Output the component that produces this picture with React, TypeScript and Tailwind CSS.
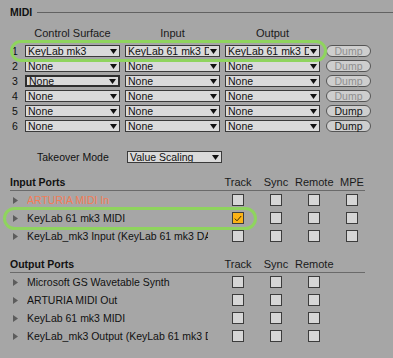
import React from 'react';

type Port = { name: string; orange?: boolean; track?: boolean };

const surfaces = [
  { cs: 'KeyLab mk3', input: 'KeyLab 61 mk3 DAW', output: 'KeyLab 61 mk3 DAW', dump: false },
  { cs: 'None', input: 'None', output: 'None', dump: false },
  { cs: 'None', input: 'None', output: 'None', dump: false, focused: true },
  { cs: 'None', input: 'None', output: 'None', dump: false },
  { cs: 'None', input: 'None', output: 'None', dump: true },
  { cs: 'None', input: 'None', output: 'None', dump: true },
];

const inputPorts: Port[] = [
  { name: 'ARTURIA MIDI In', orange: true },
  { name: 'KeyLab 61 mk3 MIDI', track: true },
  { name: 'KeyLab_mk3 Input (KeyLab 61 mk3 DAW)' },
];

const outputPorts: Port[] = [
  { name: 'Microsoft GS Wavetable Synth' },
  { name: 'ARTURIA MIDI Out' },
  { name: 'KeyLab 61 mk3 MIDI' },
  { name: 'KeyLab_mk3 Output (KeyLab 61 mk3 DAW)' },
];

function Select({ value, focused }: { value: string; focused?: boolean }) {
  return (
    <div
      className={`w-[95px] h-[12px] flex items-center bg-[#dadada] ${
        focused ? 'border-2 border-[#2e2e2e]' : 'border border-[#3a3a3a]'
      }`}
    >
      <span className="flex-1 overflow-hidden whitespace-nowrap pl-[2px] text-[10.5px] leading-[10px] text-[#111]">
        {value}
      </span>
      <svg width="7" height="5" viewBox="0 0 7 5" className="shrink-0 ml-[1px] mr-[2px]">
        <path d="M0 0H7L3.5 5Z" fill="#111" />
      </svg>
    </div>
  );
}

function Box({ checked }: { checked?: boolean }) {
  return (
    <div
      className={`w-[12px] h-[12px] border border-[#3c3c3c] flex items-center justify-center ${
        checked ? 'bg-[#fbb316]' : 'bg-[#d6d6d6]'
      }`}
    >
      {checked && (
        <svg width="8" height="7" viewBox="0 0 8 7">
          <path d="M0.8 3.6L3 5.8L7.2 1" fill="none" stroke="#3a2a00" strokeWidth="1" />
        </svg>
      )}
    </div>
  );
}

function PortSection({ title, ports, cols }: { title: string; ports: Port[]; cols: string[] }) {
  return (
    <div className="pl-[10px]">
      <div className="flex items-center h-[14px]">
        <div className="w-[209px] text-[10.5px] font-bold leading-none text-[#111]">{title}</div>
        {cols.map(c => (
          <div key={c} className="w-[38px] text-center text-[11px] leading-none text-[#1a1a1a] whitespace-nowrap">
            {c}
          </div>
        ))}
      </div>
      <div className="w-[355px] h-px bg-[#6a6a6a] mt-[1px]" />
      {ports.map(p => (
        <div key={p.name} className="flex items-center h-[18px]">
          <div className="w-[209px] flex items-center">
            <svg width="5" height="7" viewBox="0 0 5 7" className="ml-[3px] mr-[9px] shrink-0">
              <path d="M0 0L5 3.5L0 7Z" fill="#5c5c5c" />
            </svg>
            <span
              className={`w-[181px] overflow-hidden whitespace-nowrap text-[10.5px] leading-[14px] ${
                p.orange ? 'text-[#f27c57]' : 'text-[#111]'
              }`}
            >
              {p.name}
            </span>
          </div>
          {cols.map((c, i) => (
            <div key={c} className="w-[38px] flex justify-center">
              <Box checked={i === 0 && p.track} />
            </div>
          ))}
        </div>
      ))}
    </div>
  );
}

export default function App() {
  return (
    <div className="relative w-[393px] h-[358px] overflow-hidden bg-[#a6a6a6] font-['Liberation_Sans',Arial,sans-serif]">
      {/* MIDI heading */}
      <div className="flex items-center h-[14px] mt-[5px] pl-[10px]">
        <span className="text-[10.5px] font-bold leading-none text-[#111]">MIDI</span>
        <div className="flex-1 h-px bg-[#626262] ml-[5px]" />
      </div>

      {/* Control surfaces */}
      <div className="pl-[10px] mt-[7px]">
        <div className="flex items-center h-[14px] text-[11px] leading-none text-[#1a1a1a]">
          <div className="w-[15px]" />
          <div className="flex gap-[5px]">
            <div className="w-[95px] text-center">Control Surface</div>
            <div className="w-[95px] text-center">Input</div>
            <div className="w-[95px] text-center">Output</div>
          </div>
        </div>
        <div className="flex flex-col gap-[3px] mt-[5px]">
          {surfaces.map((s, i) => (
            <div key={i} className="flex items-center h-[12px]">
              <span className="w-[15px] pl-[2px] text-[10.5px] leading-none text-[#111]">{i + 1}</span>
              <div className="flex gap-[5px]">
                <Select value={s.cs} focused={s.focused} />
                <Select value={s.input} />
                <Select value={s.output} />
              </div>
              <div
                className={`ml-[6px] w-[45px] h-[12px] rounded-full border border-[#555] bg-[#cecece] flex items-center justify-center text-[10.5px] leading-none ${
                  s.dump ? 'text-[#111]' : 'text-[#8e8e8e]'
                }`}
              >
                Dump
              </div>
            </div>
          ))}
        </div>
      </div>

      {/* Takeover */}
      <div className="flex items-center h-[12px] mt-[19px] pl-[37px]">
        <span className="w-[90px] text-[10.5px] leading-none text-[#111]">Takeover Mode</span>
        <Select value="Value Scaling" />
      </div>

      <div className="mt-[12px]">
        <PortSection title="Input Ports" ports={inputPorts} cols={['Track', 'Sync', 'Remote', 'MPE']} />
      </div>
      <div className="mt-[12px]">
        <PortSection title="Output Ports" ports={outputPorts} cols={['Track', 'Sync', 'Remote']} />
      </div>

      {/* highlight rings */}
      <div className="absolute left-[10px] top-[40px] w-[317px] h-[22px] rounded-full border-[3px] border-[#8fd45e]" />
      <div className="absolute left-[3px] top-[207px] w-[254px] h-[23px] rounded-full border-[3px] border-[#8fd45e]" />
    </div>
  );
}
